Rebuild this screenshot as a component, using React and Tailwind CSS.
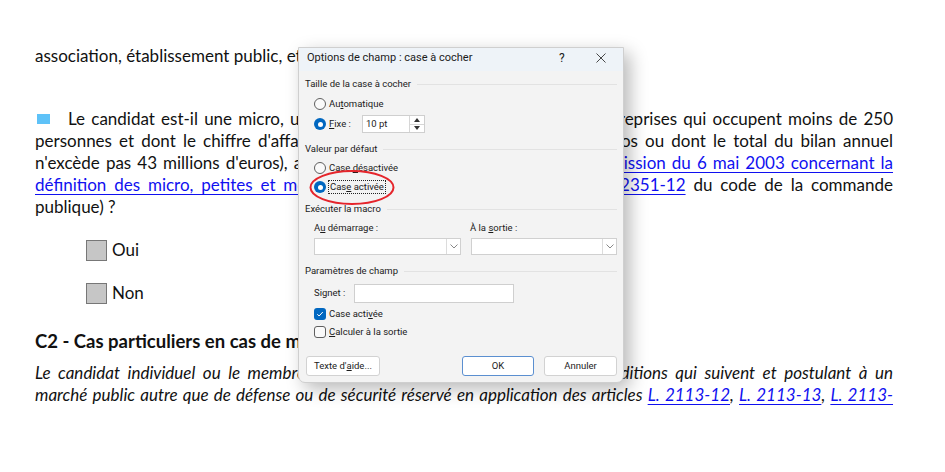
import React from 'react'

const jl = 'text-justify [text-align-last:justify]'

function Lien({ children }) {
  return <a className="text-[#1010f0] underline decoration-1 underline-offset-[3px]">{children}</a>
}

function Radio({ checked }) {
  if (checked) {
    return (
      <span className="flex h-[12px] w-[12px] shrink-0 items-center justify-center rounded-full bg-[#0067c0]">
        <span className="h-[5px] w-[5px] rounded-full bg-white" />
      </span>
    )
  }
  return <span className="h-[12px] w-[12px] shrink-0 rounded-full border border-[#5f5f5f] bg-[#fafafa]" />
}

function Coche({ checked }) {
  if (checked) {
    return (
      <span className="flex h-[12px] w-[12px] shrink-0 items-center justify-center rounded-[3px] bg-[#0067c0]">
        <svg width="8" height="8" viewBox="0 0 8 8" fill="none">
          <path d="M1.3 4.2 3.1 6 6.8 2" stroke="white" strokeWidth="1" />
        </svg>
      </span>
    )
  }
  return <span className="h-[12px] w-[12px] shrink-0 rounded-[3px] border border-[#5f5f5f] bg-[#fafafa]" />
}

function Titre({ children, className }) {
  return (
    <div className={`flex h-[14px] items-center gap-[6px] px-[6px] ${className}`}>
      <span>{children}</span>
      <span className="h-px flex-1 bg-[#e2e2e2]" />
    </div>
  )
}

function Chevron() {
  return (
    <svg width="8" height="5" viewBox="0 0 8 5" fill="none">
      <path d="M.5.5 4 4 7.5.5" stroke="#7a7a7a" strokeWidth="0.9" />
    </svg>
  )
}

function Combo({ className }) {
  return (
    <div className={`flex h-[17px] border border-[#d0d0d0] bg-white ${className}`}>
      <div className="flex-1" />
      <div className="flex w-[14px] items-center justify-center border-l border-[#dcdcdc]">
        <Chevron />
      </div>
    </div>
  )
}

function Bouton({ children, primary, className }) {
  return (
    <button
      type="button"
      className={`flex h-[20px] items-center justify-center rounded-[3px] border bg-white ${
        primary ? 'border-[#5b8fd0]' : 'border-[#d2d2d2]'
      } ${className}`}
    >
      {children}
    </button>
  )
}

function Dialogue() {
  return (
    <div className="absolute left-[298px] top-[47px] flex w-[326px] flex-col rounded-b-[7px] border border-[#cfcfcf] bg-[#f3f3f3] pb-[6px] font-['Roboto',sans-serif] text-[9.5px] text-[#1b1b1b] shadow-[6px_6px_18px_rgba(0,0,0,0.28)]">
      <div className="flex h-[23px] items-center bg-[#eef3f8] pb-[3px] pl-[8px]">
        <span className="flex-1 text-[11px]">Options de champ : case à cocher</span>
        <span className="w-[26px] text-[12px]">?</span>
        <span className="flex w-[38px] justify-center pr-[6px]">
          <svg width="10" height="10" viewBox="0 0 10 10" fill="none">
            <path d="M.5.5l9 9M9.5.5l-9 9" stroke="#333" strokeWidth="0.9" />
          </svg>
        </span>
      </div>

      <Titre className="mt-[6px]">Taille de la case à cocher</Titre>
      <div className="mt-[5px] flex h-[16px] items-center gap-[3px] pl-[15px]">
        <Radio />
        <span>
          Au<u>t</u>omatique
        </span>
      </div>
      <div className="mt-[3px] flex h-[18px] items-center pl-[15px]">
        <Radio checked />
        <span className="ml-[3px] w-[33px]">
          <u>F</u>ixe :
        </span>
        <div className="flex h-[18px] border border-[#cfcfcf] bg-white">
          <span className="flex w-[46px] items-center pl-[3px]">10 pt</span>
          <div className="flex w-[15px] flex-col border-l border-[#d6d6d6]">
            <span className="flex flex-1 items-center justify-center border-b border-[#d6d6d6]">
              <svg width="6" height="4" viewBox="0 0 6 4"><path d="M0 4 3 0 6 4z" fill="#333" /></svg>
            </span>
            <span className="flex flex-1 items-center justify-center">
              <svg width="6" height="4" viewBox="0 0 6 4"><path d="M0 0h6L3 4z" fill="#333" /></svg>
            </span>
          </div>
        </div>
      </div>

      <Titre className="mt-[9px]">Valeur par défaut</Titre>
      <div className="mt-[4px] flex h-[16px] items-center gap-[3px] pl-[15px]">
        <Radio />
        <span>
          Case <u>d</u>ésactivée
        </span>
      </div>
      <div className="relative mt-[3px] flex h-[16px] items-center gap-[2px] pl-[15px]">
        <Radio checked />
        <span className="border border-dotted border-[#222] px-[1px] leading-[12px]">
          Cas<u>e</u> activée
        </span>
        <svg className="absolute left-[10px] top-[-10px]" width="86" height="37" viewBox="0 0 86 37" fill="none">
          <ellipse cx="43" cy="18.5" rx="41.5" ry="16.5" stroke="#e5252b" strokeWidth="2" />
        </svg>
      </div>

      <Titre className="mt-[7px]">Exécuter la macro</Titre>
      <div className="mt-[5px] flex h-[14px] items-center pl-[15px]">
        <span className="w-[156px]">
          A<u>u</u> démarrage :
        </span>
        <span>
          À la <u>s</u>ortie :
        </span>
      </div>
      <div className="mt-[3px] flex pl-[15px] pr-[6px]">
        <Combo className="w-[147px]" />
        <Combo className="ml-[10px] flex-1" />
      </div>

      <Titre className="mt-[9px]">Paramètres de champ</Titre>
      <div className="mt-[6px] flex h-[19px] items-center pl-[15px]">
        <span className="w-[40px]">Signet :</span>
        <div className="h-[19px] w-[160px] border border-[#cfcfcf] bg-white" />
      </div>
      <div className="mt-[3px] flex h-[16px] items-center gap-[3px] pl-[15px]">
        <Coche checked />
        <span>
          Case acti<u>v</u>ée
        </span>
      </div>
      <div className="mt-[2px] flex h-[16px] items-center gap-[3px] pl-[15px]">
        <Coche />
        <span>
          <u>C</u>alculer à la sortie
        </span>
      </div>

      <div className="mt-[16px] flex items-center pl-[7px] pr-[6px]">
        <Bouton className="w-[74px]">
          Texte d'<u>a</u>ide...
        </Bouton>
        <div className="flex-1" />
        <Bouton primary className="w-[72px]">
          OK
        </Bouton>
        <Bouton className="ml-[10px] w-[73px]">Annuler</Bouton>
      </div>
    </div>
  )
}

function CaseDoc({ label }) {
  return (
    <div className="flex h-[22px] items-center pl-[51px]">
      <span className="h-[21px] w-[21px] border border-[#777] bg-[#c6c6c6]" />
      <span className="ml-[5px]">{label}</span>
    </div>
  )
}

export default function App() {
  return (
    <div className="relative h-[472px] w-[945px] overflow-hidden bg-white">
      <div className="flex flex-col pl-[35px] pr-[52px] pt-[45px] font-['Lato',sans-serif] text-[17px] leading-[22px] text-[#111]">
        <div>association, établissement public, etc.)</div>

        <div className="mt-[41px] flex">
          <span className="ml-[2px] mr-[18px] mt-[6px] h-[10px] w-[13px] bg-[#5ec2f8]" />
          <div className={`flex-1 ${jl}`}>
            Le candidat est-il une micro, une petite ou une moyenne entreprise (entreprises qui occupent moins de 250
          </div>
        </div>
        <div className={jl}>
          personnes et dont le chiffre d'affaires annuel n'excède pas 50 millions d'euros ou dont le total du bilan annuel
        </div>
        <div className={jl}>
          n'excède pas 43 millions d'euros), au sens de la <Lien>recommandation de la Commission du 6 mai 2003 concernant la</Lien>
        </div>
        <div className={jl}>
          <Lien>définition des micro, petites et moyennes entreprises</Lien>), et selon l'article <Lien>R. 2351-12</Lien> du code de la commande
        </div>
        <div>publique) ?</div>

        <div className="mt-[21px]">
          <CaseDoc label="Oui" />
        </div>
        <div className="mt-[21px]">
          <CaseDoc label="Non" />
        </div>

        <div className="mt-[25px] text-[18.5px] font-bold leading-[24px]">
          C2 - Cas particuliers en cas de marché de défense ou de sécurité
        </div>

        <div className="mt-[9px] italic">
          <div className={jl}>
            Le candidat individuel ou le membre du groupement qui remplit toutes les conditions qui suivent et postulant à un
          </div>
          <div className={jl}>
            marché public autre que de défense ou de sécurité réservé en application des articles <Lien>L. 2113-12</Lien>, <Lien>L. 2113-13</Lien>, <Lien>L. 2113-</Lien>
          </div>
        </div>
      </div>
      <Dialogue />
    </div>
  )
}
